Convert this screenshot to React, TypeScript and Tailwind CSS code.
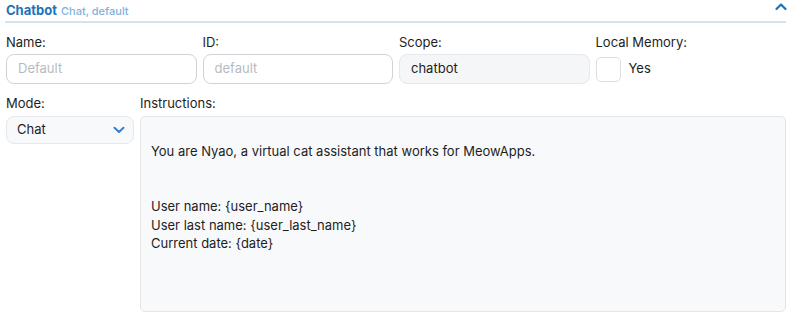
import React from "react";

export default function App() {
  return (
    <div className="w-[793px] h-[326px] bg-white pl-[6px] pr-[7px] text-[#1e1e1e] font-[Inter,'Liberation_Sans',sans-serif]">
      <div className="flex items-end justify-between h-[23px] border-b-2 border-[#d3e3f2] -ml-px pl-px pb-[4px]">
        <div className="flex items-baseline gap-[4px]">
          <span className="text-[13px] font-bold text-[#1f72b9] leading-none">Chatbot</span>
          <span className="text-[11px] font-medium text-[#7fb2dc] leading-none">Chat, default</span>
        </div>
        <svg width="12" height="9" viewBox="0 0 12 9" className="mb-[6px] mr-[-1px]">
          <path d="M1.5 7 L6 2.5 L10.5 7" fill="none" stroke="#1f72b9" strokeWidth="2.2" strokeLinecap="round" strokeLinejoin="round" />
        </svg>
      </div>

      <div className="grid grid-cols-4 gap-x-[6px] mt-[11px]">
        <div className="flex flex-col gap-[4px]">
          <label className="text-[13px] leading-[16px]">Name:</label>
          <div className="h-[30px] rounded-[8px] border border-[#cfd3d9] bg-white flex items-center px-[11px] text-[13px] text-[#b7bbc1]">Default</div>
        </div>
        <div className="flex flex-col gap-[4px]">
          <label className="text-[13px] leading-[16px]">ID:</label>
          <div className="h-[30px] rounded-[8px] border border-[#cfd3d9] bg-white flex items-center px-[11px] text-[13px] text-[#b7bbc1]">default</div>
        </div>
        <div className="flex flex-col gap-[4px]">
          <label className="text-[13px] leading-[16px]">Scope:</label>
          <div className="h-[30px] rounded-[8px] border border-[#e6e8eb] bg-[#f5f6f8] flex items-center px-[11px] text-[13px] text-[#1e1e1e]">chatbot</div>
        </div>
        <div className="flex flex-col gap-[4px]">
          <label className="text-[13px] leading-[16px]">Local Memory:</label>
          <div className="h-[30px] flex items-center gap-[8px]">
            <div className="w-[25px] h-[25px] rounded-[5px] border border-[#dcdfe3] bg-white" />
            <span className="text-[13px]">Yes</span>
          </div>
        </div>
      </div>

      <div className="flex gap-[6px] mt-[11px]">
        <div className="w-[128px] flex flex-col gap-[5px]">
          <label className="text-[13px] leading-[16px]">Mode:</label>
          <div className="h-[28px] rounded-[8px] border border-[#e6e8eb] bg-[#f8f9fb] flex items-center justify-between pl-[10px] pr-[8px] text-[13px]">
            <span>Chat</span>
            <svg width="12" height="8" viewBox="0 0 12 8">
              <path d="M1.5 1.8 L6 6 L10.5 1.8" fill="none" stroke="#2e83d0" strokeWidth="2" strokeLinecap="round" strokeLinejoin="round" />
            </svg>
          </div>
        </div>
        <div className="flex-1 flex flex-col gap-[5px]">
          <label className="text-[13px] leading-[16px]">Instructions:</label>
          <div className="h-[196px] rounded-[5px] border border-[#e3e5e8] bg-[#f8f9fb] px-[10px] pt-[6px] text-[13px] leading-[18.5px] whitespace-pre-wrap">
            {"\nYou are Nyao, a virtual cat assistant that works for MeowApps.\n\n\nUser name: {user_name}\nUser last name: {user_last_name}\nCurrent date: {date}"}
          </div>
        </div>
      </div>
    </div>
  );
}
